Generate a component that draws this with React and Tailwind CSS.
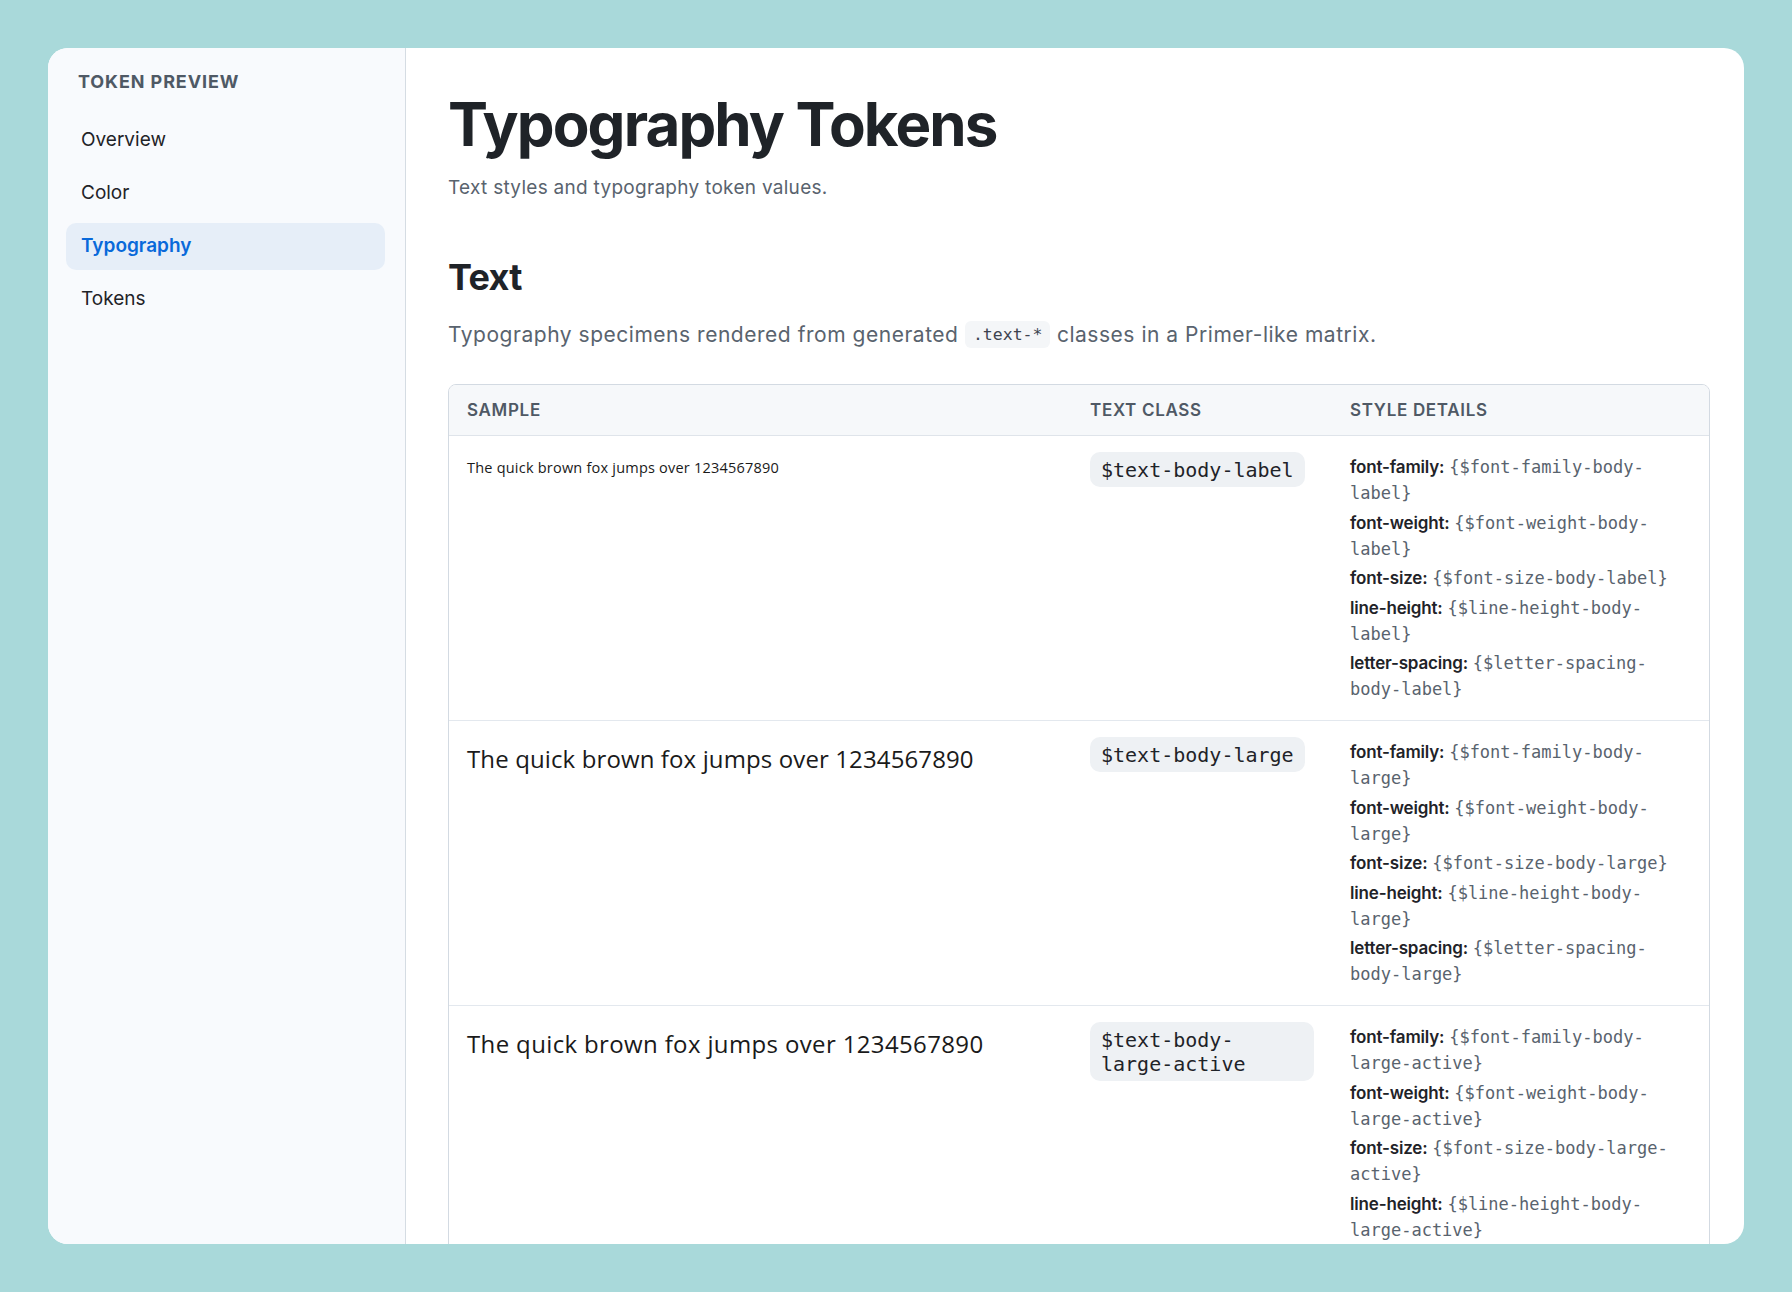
import React from "react";

const UI = { fontFamily: "Inter, 'Noto Sans', sans-serif" };
const MONO = { fontFamily: "'DejaVu Sans Mono', 'Liberation Mono', monospace" };
const SAMPLE = { fontFamily: "'Open Sans', 'Noto Sans', sans-serif" };

const rows = [
  {
    cls: "$text-body-label",
    sample: "text-[14.5px] leading-[28px] font-medium tracking-[0.015em]",
    key: "label",
  },
  {
    cls: "$text-body-large",
    sample: "text-[24px] leading-[40px] font-normal tracking-[0.005em]",
    key: "large",
  },
  {
    cls: "$text-body-large-active",
    sample: "text-[24px] leading-[40px] font-medium tracking-[0.015em]",
    key: "large-active",
  },
];

function Details({ k }) {
  const items = [
    ["font-family", `{$font-family-body-${k}}`],
    ["font-weight", `{$font-weight-body-${k}}`],
    ["font-size", `{$font-size-body-${k}}`],
    ["line-height", `{$line-height-body-${k}}`],
    ["letter-spacing", `{$letter-spacing-body-${k}}`],
  ];
  return (
    <div className="flex flex-col gap-[3.5px]">
      {items.map(([l, v]) => (
        <div key={l} className="text-[17px] leading-[26px]">
          <span className="font-semibold text-[#1f2328] tracking-[-0.01em]" style={UI}>
            {l}:
          </span>{" "}
          <span className="text-[#59636e] text-[17px]" style={MONO}>
            {v}
          </span>
        </div>
      ))}
    </div>
  );
}

export default function App() {
  const nav = ["Overview", "Color", "Typography", "Tokens"];
  return (
    <div className="min-h-screen bg-[#a9d9da] p-12" style={UI}>
      <div className="h-[1196px] bg-white rounded-[20px] overflow-hidden flex">
        <aside className="w-[358px] shrink-0 bg-[#f8fafd] border-r border-[#d5dce3] pl-[18px] pr-[20px] pt-[22px]">
          <div className="pl-[12px] text-[18px] leading-[24px] font-bold tracking-[0.05em] text-[#4f5965]">
            TOKEN PREVIEW
          </div>
          <nav className="mt-[23px] flex flex-col gap-[6px]">
            {nav.map((n) => (
              <div
                key={n}
                className={
                  n === "Typography"
                    ? "h-[47px] px-[15px] rounded-[10px] flex items-center text-[19px] font-semibold text-[#0969da] bg-[#e6eef8]"
                    : "h-[47px] px-[15px] rounded-[10px] flex items-center text-[19px] text-[#1f2328]"
                }
              >
                {n}
              </div>
            ))}
          </nav>
        </aside>
        <main className="flex-1 min-w-0 pl-[42px] pr-[34px] pt-[43px] overflow-hidden">
          <h1 className="text-[60px] leading-[66px] font-bold tracking-[-0.031em] text-[#1f2328]">
            Typography Tokens
          </h1>
          <p className="mt-[17px] text-[19px] leading-[27px] tracking-[0.015em] text-[#59636e]">
            Text styles and typography token values.
          </p>
          <h2 className="mt-[55px] text-[36px] leading-[43px] font-bold tracking-[-0.02em] text-[#1f2328]">
            Text
          </h2>
          <p className="mt-[20px] text-[21px] leading-[31px] tracking-[0.025em] text-[#59636e]">
            Typography specimens rendered from generated{" "}
            <code
              className="inline-block align-middle px-[8px] h-[27px] leading-[27px] rounded-[6px] bg-[#f4f6f8] text-[16.5px] tracking-normal text-[#3d4450] -mt-[3px]"
              style={MONO}
            >
              .text-*
            </code>{" "}
            classes in a Primer-like matrix.
          </p>

          <div className="mt-[34px] border border-[#d3dae2] rounded-[8px] overflow-hidden">
            <div className="grid grid-cols-[623px_260px_1fr] bg-[#f6f8fa] border-b border-[#dfe4ea] text-[17px] leading-[24px] font-semibold tracking-[0.04em] text-[#4f5965]">
              <div className="px-[18px] py-[13px]">SAMPLE</div>
              <div className="px-[18px] py-[13px]">TEXT CLASS</div>
              <div className="px-[18px] py-[13px]">STYLE DETAILS</div>
            </div>
            {rows.map((r, i) => (
              <div
                key={r.key}
                className={
                  i < rows.length - 1
                    ? "grid grid-cols-[623px_260px_1fr] border-b border-[#e3e8ee]"
                    : "grid grid-cols-[623px_260px_1fr]"
                }
              >
                <div className="p-[18px]">
                  <div className={r.sample + " text-[#1a1a1a]"} style={SAMPLE}>
                    The quick brown fox jumps over 1234567890
                  </div>
                </div>
                <div className="px-[18px] pt-[16px] pb-[18px]">
                  <span
                    className="inline-block max-w-full bg-[#eef1f4] rounded-[10px] px-[11px] py-[5.5px] text-[20px] leading-[24px] text-[#1f2328]"
                    style={MONO}
                  >
                    {r.cls}
                  </span>
                </div>
                <div className="p-[18px]">
                  <Details k={r.key} />
                </div>
              </div>
            ))}
          </div>
        </main>
      </div>
    </div>
  );
}
